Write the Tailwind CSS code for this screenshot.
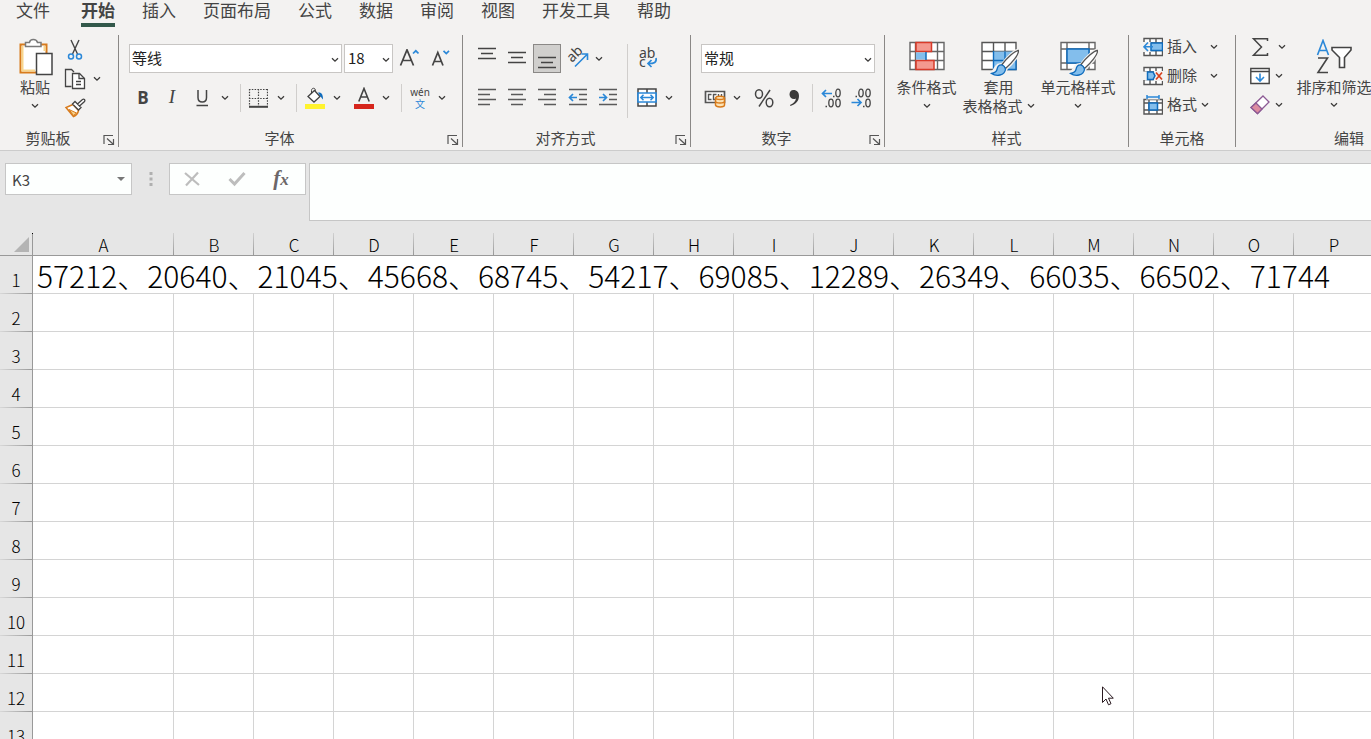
<!DOCTYPE html>
<html lang="zh-CN">
<head>
<meta charset="utf-8">
<meta name="viewport" content="width=device-width, initial-scale=1">
<title>工作表</title>
<script src="https://cdn.jsdelivr.net/npm/@tailwindcss/browser@4"></script>
</head>
<body class="relative flex h-screen flex-col overflow-hidden bg-[#e6e6e6] font-['Noto_Sans_CJK_SC',sans-serif] text-[15px] text-[#444444]">

<svg class="hidden" aria-hidden="true">
  <symbol id="chev" viewBox="0 0 8 6"><path d="M1 1.2 4 4.2 7 1.2" fill="none" stroke="#3b3a39" stroke-width="1.3"/></symbol>
  <symbol id="launch" viewBox="0 0 12 12"><path d="M1 10V1.500H10M4 4.500 10 10M10.500 5V10.500H5" fill="none" stroke="#555" stroke-width="1.200"/></symbol>
  <symbol id="brush" viewBox="0 0 30 28">
    <path d="M28.500 1.500C25 1.500 17 9 12.500 15.500L8 16.500C5 18 6 22 1 24.500 6 27 14 26.500 15.500 20.500L16.500 19C22 14 29 5.500 28.500 1.500Z" fill="#f3f2f1" stroke="#f3f2f1" stroke-width="3.500"/>
    <path d="M28.500 1.500C25 1.500 17 9 12 15.500L15.500 19.500C22 14 29 5.500 28.500 1.500Z" fill="#fff" stroke="#555" stroke-width="1.300"/>
    <path d="M12 16C8.500 15.500 7.500 18 7 20.500 6.500 23 4 24 1.500 24.500 6 27.500 15 27 15.500 20 15 18 13.500 16.500 12 16Z" fill="#83beec" stroke="#0f6cbd" stroke-width="1.300"/>
  </symbol>
</svg>

<header class="shrink-0 border-b border-[#cccccc] bg-[#f3f2f1]">
  <nav class="flex h-[27px] gap-[27px] pl-4 text-[17px] leading-5" aria-label="功能区">
    <a href="#" class="mr-1 shrink-0">文件</a>
    <a href="#" aria-current="page" class="h-[27px] shrink-0 border-b-4 border-[#32584a] font-bold">开始</a>
    <a href="#" class="shrink-0">插入</a>
    <a href="#" class="shrink-0">页面布局</a>
    <a href="#" class="shrink-0">公式</a>
    <a href="#" class="shrink-0">数据</a>
    <a href="#" class="shrink-0">审阅</a>
    <a href="#" class="shrink-0">视图</a>
    <a href="#" class="shrink-0">开发工具</a>
    <a href="#" class="shrink-0">帮助</a>
  </nav>

  <div class="flex overflow-hidden pt-2 pb-[3px]">

    <!-- 剪贴板 -->
    <section class="flex h-28 w-[119px] shrink-0 flex-col justify-between border-r border-[#8a8886]">
      <div class="flex pl-[14px]">
        <button class="flex w-[42px] flex-col items-center pt-[2px] leading-5">
          <svg class="h-10 w-[36px]" viewBox="0 0 36 40" fill="none">
            <path d="M3.500 7.500H29.500V35.500H3.500Z" fill="#fff" stroke="#d87b1c" stroke-width="2"/>
            <path d="M5.500 9V33.500H18M27.500 9V14" stroke="#f8d58c" stroke-width="2"/>
            <path d="M8.500 9.500V5.500H12.500C13 1.500 19.500 1.500 20.500 5.500H24V9.500Z" fill="#fff" stroke="#7a7a7a" stroke-width="1.500"/>
            <path d="M19.500 16.500H35V37.500H19.500Z" fill="#fff" stroke="#444" stroke-width="1.500"/>
          </svg>
          <span>粘贴</span>
          <svg class="mt-[6px] h-[6px] w-2"><use href="#chev"/></svg>
        </button>
        <div class="flex flex-col pl-2">
          <button class="flex h-[29px] w-[22px] items-center justify-center" aria-label="剪切">
            <svg class="h-[22px] w-4" viewBox="0 0 16 22" fill="none">
              <path d="M4 1 10.500 15M12 1 5.500 15" stroke="#444" stroke-width="1.400"/>
              <circle cx="4" cy="17.500" r="2.500" stroke="#2b88d8" stroke-width="1.500"/><circle cx="12" cy="17.500" r="2.500" stroke="#2b88d8" stroke-width="1.500"/>
            </svg>
          </button>
          <div class="flex">
            <button class="flex h-[29px] w-[22px] items-center justify-center" aria-label="复制">
              <svg class="h-[22px] w-[22px]" viewBox="0 0 22 22" fill="none" stroke="#444" stroke-width="1.300">
                <path d="M7.500 18.500H1.500V1.500H7.500L10 4"/><path d="M8.500 5.500H15.500L20.500 10.500V20.500H8.500Z" fill="#fff"/><path d="M15 5.500V10.500H20.500M12 13.500H17M12 16.500H17"/>
              </svg>
            </button>
            <button class="flex h-[29px] w-[22px] items-center justify-center" aria-label="复制选项"><svg class="h-[6px] w-2"><use href="#chev"/></svg></button>
          </div>
          <button class="flex h-[29px] w-[22px] items-center justify-center" aria-label="格式刷">
            <svg class="h-5 w-[22px]" viewBox="0 0 22 20" fill="none">
              <path d="M9 6.500 2 9.500 9.500 18.500C12 17.500 14 15 14.500 12.500Z" fill="#fff" stroke="#d87b1c" stroke-width="1.500"/>
              <path d="M5 11.500 12.500 15 9.500 17.500Z" fill="#f8d58c" stroke="#d87b1c"/>
              <path d="M8.500 6 11 3.500 17 9.500 14.500 12Z M13.500 6 18.500 1.500C20 .5 21.500 2 20.500 3.500L15.500 8" fill="#fff" stroke="#444" stroke-width="1.300"/>
            </svg>
          </button>
        </div>
      </div>
      <div class="flex h-[18px] items-center leading-[18px]"><h2 class="flex-1 text-center">剪贴板</h2><button class="w-[22px]" aria-label="剪贴板设置"><svg class="mt-1 ml-[7px] h-3 w-3"><use href="#launch"/></svg></button></div>
    </section>

    <!-- 字体 -->
    <section class="flex h-28 w-[344px] shrink-0 flex-col justify-between border-r border-[#8a8886]">
      <div class="flex flex-col gap-[10px] pt-[9px] pl-[10px]">
        <div class="flex h-[29px]">
          <div class="relative mr-[2px] w-[213px]"><select aria-label="字体" class="h-full w-full appearance-none border border-[#c8c6c4] bg-white pl-[2px] text-[#222]"><option>等线</option></select><svg class="pointer-events-none absolute top-[13px] right-[3px] h-[6px] w-2"><use href="#chev"/></svg></div>
          <div class="relative w-[49px]"><select aria-label="字号" class="h-full w-full appearance-none border border-[#c8c6c4] bg-white pl-[3px] text-[#222]"><option>18</option></select><svg class="pointer-events-none absolute top-[13px] right-[3px] h-[6px] w-2"><use href="#chev"/></svg></div>
          <button class="flex w-8 items-center justify-center" aria-label="增大字号">
            <svg class="h-5 w-5" viewBox="0 0 20 20" fill="none"><path d="M1.500 16.500 8 .8 14.500 16.500M4 11.500H12" stroke="#444" stroke-width="1.700"/><path d="M14 4.500 16.800 1.800 19.500 4.500" stroke="#2b88d8" stroke-width="1.700"/></svg>
          </button>
          <button class="flex w-8 items-center justify-center" aria-label="减小字号">
            <svg class="h-5 w-5" viewBox="0 0 20 20" fill="none"><path d="M1.500 16.500 6.800 3.500 12 16.500M3.500 12.500H10" stroke="#444" stroke-width="1.700"/><path d="M12.500 1.800 15.300 4.500 18 1.800" stroke="#2b88d8" stroke-width="1.700"/></svg>
          </button>
        </div>
        <div class="flex h-[29px] items-center">
          <button class="w-7 font-['Open_Sans',sans-serif] text-[17px] font-bold">B</button>
          <button class="w-[30px] font-['Liberation_Serif',serif] text-[19px] italic">I</button>
          <button class="flex w-[30px] justify-center" aria-label="下划线"><svg class="h-5 w-4" viewBox="0 0 16 20" fill="none" stroke="#444" stroke-width="1.500"><path d="M4 2V9.500C4 15.500 12.500 15.500 12.500 9.500V2M2.500 17.500H14"/></svg></button>
          <button class="flex w-4 justify-center" aria-label="下划线选项"><svg class="h-[6px] w-2"><use href="#chev"/></svg></button>
          <i class="mx-[7px] h-7 w-px bg-[#d0cecc]"></i>
          <button class="flex w-[22px]" aria-label="边框"><svg class="h-5 w-5" viewBox="0 0 20 20" fill="none" stroke="#444"><path d="M1 1.500H20M1.500 1V18M10.500 1V18M19.500 1V18M1 10.500H20" stroke-width="1.200" stroke-dasharray="1.500 1.300"/><path d="M1 18.800H20" stroke-width="2"/></svg></button>
          <button class="ml-[3px] flex w-4 justify-center" aria-label="边框选项"><svg class="h-[6px] w-2"><use href="#chev"/></svg></button>
          <i class="mx-[7px] h-7 w-px bg-[#d0cecc]"></i>
          <button class="flex w-[22px] justify-center" aria-label="填充颜色"><svg class="h-[22px] w-5" viewBox="0 0 20 22" fill="none"><path d="M3 9.500 9.500 3.500 15 9.500 9 15Z" fill="#fff" stroke="#444" stroke-width="1.300"/><path d="M6.500 7V3.500C6.500.5 10.500.5 10.500 3.500V5" stroke="#444"/><path d="M13 5.500C16.500 5 18 7 18 12.500L15.500 9.500Z" fill="#0f6cbd"/><path d="M0 17H20V22H0Z" fill="#fff32e"/></svg></button>
          <button class="ml-[3px] flex w-4 justify-center" aria-label="填充颜色选项"><svg class="h-[6px] w-2"><use href="#chev"/></svg></button>
          <button class="ml-2 flex w-[22px] justify-center" aria-label="字体颜色"><svg class="h-[22px] w-5" viewBox="0 0 20 22" fill="none"><path d="M4.800 14.500 10 1.500 15.200 14.500M6.500 10H13.500" stroke="#444" stroke-width="1.600"/><path d="M0 17H20V22H0Z" fill="#d6261c"/></svg></button>
          <button class="ml-[3px] flex w-4 justify-center" aria-label="字体颜色选项"><svg class="h-[6px] w-2"><use href="#chev"/></svg></button>
          <i class="mx-[7px] h-7 w-px bg-[#d0cecc]"></i>
          <button class="flex w-[22px] flex-col items-center font-['Noto_Sans','Noto_Sans_CJK_SC',sans-serif] text-[10px] leading-[13px]"><span>wén</span><span class="leading-[10px] text-[#2b88d8]">文</span></button>
          <button class="ml-[3px] flex w-4 justify-center" aria-label="拼音选项"><svg class="h-[6px] w-2"><use href="#chev"/></svg></button>
        </div>
      </div>
      <div class="flex h-[18px] items-center leading-[18px]"><h2 class="flex-1 text-center">字体</h2><button class="w-[22px]" aria-label="字体设置"><svg class="mt-1 ml-[7px] h-3 w-3"><use href="#launch"/></svg></button></div>
    </section>

    <!-- 对齐方式 -->
    <section class="flex h-28 w-[228px] shrink-0 flex-col justify-between border-r border-[#8a8886]">
      <div class="flex pt-[9px] pl-[10px]">
        <div class="flex w-[154px] flex-col gap-[10px]">
          <div class="flex h-[29px] gap-[2px]">
            <button class="w-7" aria-label="顶端对齐"><svg class="h-[29px] w-7" viewBox="0 0 28 29" stroke="#444" stroke-width="1.500"><path d="M5 4.500H23M8 9.500H20M5 14.500H23"/></svg></button>
            <button class="w-7" aria-label="垂直居中"><svg class="h-[29px] w-7" viewBox="0 0 28 29" stroke="#444" stroke-width="1.500"><path d="M5 8.500H23M8 13.500H20M5 18.500H23"/></svg></button>
            <button class="w-7 bg-[#d0cfcd] outline outline-1 -outline-offset-1 outline-[#8a8886]" aria-pressed="true" aria-label="底端对齐"><svg class="h-[29px] w-7" viewBox="0 0 28 29" stroke="#444" stroke-width="1.500"><path d="M5 13.500H23M8 18.500H20M5 23.500H23"/></svg></button>
            <button class="w-7" aria-label="方向"><svg class="h-[29px] w-7" viewBox="0 0 28 29" fill="none"><text transform="translate(9 19) rotate(-45)" font-size="14" font-family="Noto Sans, sans-serif" fill="#444">ab</text><path d="M12 22.500 24.500 10M18.500 10H24.500V16" stroke="#2b88d8" stroke-width="1.600"/></svg></button>
            <button class="flex w-3 items-center justify-center" aria-label="方向选项"><svg class="h-[6px] w-2"><use href="#chev"/></svg></button>
          </div>
          <div class="flex h-[29px] gap-[2px]">
            <button class="w-7" aria-label="左对齐"><svg class="h-[29px] w-7" viewBox="0 0 28 29" stroke="#5a5a5a" stroke-width="1.500"><path d="M5 6.500H23M5 11.500H17M5 16.500H23M5 21.500H17"/></svg></button>
            <button class="w-7" aria-label="居中"><svg class="h-[29px] w-7" viewBox="0 0 28 29" stroke="#5a5a5a" stroke-width="1.500"><path d="M5 6.500H23M8 11.500H20M5 16.500H23M8 21.500H20"/></svg></button>
            <button class="w-7" aria-label="右对齐"><svg class="h-[29px] w-7" viewBox="0 0 28 29" stroke="#5a5a5a" stroke-width="1.500"><path d="M5 6.500H23M11 11.500H23M5 16.500H23M11 21.500H23"/></svg></button>
            <button class="w-7" aria-label="减少缩进量"><svg class="h-[29px] w-7" viewBox="0 0 28 29" fill="none" stroke="#5a5a5a" stroke-width="1.500"><path d="M6 6.500H24M16 11.500H24M16 16.500H24M6 21.500H24"/><path d="M14 14.500H7M10 11 6.500 14.500 10 18" stroke="#2b88d8" stroke-width="1.700"/></svg></button>
            <button class="w-7" aria-label="增加缩进量"><svg class="h-[29px] w-7" viewBox="0 0 28 29" fill="none" stroke="#5a5a5a" stroke-width="1.500"><path d="M6 6.500H24M16 11.500H24M16 16.500H24M6 21.500H24"/><path d="M6 14.500H13M10 11 13.500 14.500 10 18" stroke="#2b88d8" stroke-width="1.700"/></svg></button>
          </div>
        </div>
        <i class="h-[74px] w-px self-start bg-[#d0cecc]"></i>
        <div class="flex flex-col gap-[10px] pl-[5px]">
          <button class="h-[29px] w-7" aria-label="自动换行"><svg class="h-[29px] w-7" viewBox="0 0 28 29" fill="none"><g font-size="14" font-family="Noto Sans, sans-serif" fill="#444"><text x="6" y="14">ab</text><text x="6" y="23">c</text></g><path d="M23 14C24 18.500 21 19.500 15.500 19.500M18.500 16 15 19.500 18.500 23" stroke="#2b88d8" stroke-width="1.700"/></svg></button>
          <div class="flex gap-[2px]">
            <button class="h-[29px] w-7" aria-label="合并后居中"><svg class="h-[29px] w-7" viewBox="0 0 28 29" fill="none"><path d="M5 6H23V23H5ZM14 6V23" fill="#fff" stroke="#444" stroke-width="1.500"/><path d="M5 10H23V19H5Z" fill="#fff" stroke="#2b88d8" stroke-width="1.700"/><path d="M7.500 14.500H20.500M10.500 11.800 7.800 14.500 10.500 17.200M17.500 11.800 20.200 14.500 17.500 17.200" stroke="#2b88d8" stroke-width="1.500"/></svg></button>
            <button class="flex w-3 items-center justify-center" aria-label="合并选项"><svg class="h-[6px] w-2"><use href="#chev"/></svg></button>
          </div>
        </div>
      </div>
      <div class="flex h-[18px] items-center leading-[18px]"><h2 class="flex-1 text-center">对齐方式</h2><button class="w-[22px]" aria-label="对齐设置"><svg class="mt-1 ml-[7px] h-3 w-3"><use href="#launch"/></svg></button></div>
    </section>

    <!-- 数字 -->
    <section class="flex h-28 w-[194px] shrink-0 flex-col justify-between border-r border-[#8a8886]">
      <div class="flex flex-col gap-[10px] pt-[9px] pl-[10px]">
        <div class="relative h-[29px] w-[174px]"><select aria-label="数字格式" class="h-full w-full appearance-none border border-[#c8c6c4] bg-white pl-[2px] text-[#222]"><option>常规</option></select><svg class="pointer-events-none absolute top-[13px] right-[3px] h-[6px] w-2"><use href="#chev"/></svg></div>
        <div class="flex h-[29px] items-center">
          <button class="flex w-7 justify-center" aria-label="会计数字格式"><svg class="h-5 w-[22px]" viewBox="0 0 22 20" fill="none"><path d="M1.500 3.500H20.500V14.500H1.500Z" fill="#fff" stroke="#555" stroke-width="1.700"/><path d="M7.500 6.500H4.500V11.500H7.500M12.500 6.500H9.500V11.500H12.500M14.500 6V8.500M17.500 6V8.500" stroke="#555" stroke-width="1.400"/><path d="M11.500 10V17C12 19.500 20.500 19.500 20.500 17V10C20 7.500 12 7.500 11.500 10Z" fill="#fce3b6" stroke="#d87b1c" stroke-width="1.500"/><path d="M11.500 10C12 12 20 12 20.500 10M11.500 13.500C12 15.500 20 15.500 20.500 13.500" stroke="#d87b1c" stroke-width="1.300"/></svg></button>
          <button class="flex w-4 justify-center" aria-label="会计格式选项"><svg class="h-[6px] w-2"><use href="#chev"/></svg></button>
          <button class="ml-1 flex w-[30px] justify-center" aria-label="百分比样式"><svg class="h-5 w-5" viewBox="0 0 20 20" fill="none" stroke="#444" stroke-width="1.500"><ellipse cx="5" cy="6" rx="3.500" ry="4.200"/><ellipse cx="15.500" cy="14.500" rx="3.300" ry="4.200"/><path d="M16 2 5 18.500"/></svg></button>
          <button class="flex w-[30px] justify-center" aria-label="千位分隔样式"><svg class="h-5 w-3" viewBox="0 0 12 20" fill="#3b3a39"><path d="M5.500 2C9 2 11 4.500 11 8 11 13 7.500 16.500 2.500 18L2 17C5.500 15.500 7.500 13.500 8 10.500 5 12 1.500 10 1.500 6.500 1.500 4 3 2 5.500 2Z"/></svg></button>
          <i class="mx-[3px] h-7 w-px bg-[#d0cecc]"></i>
          <button class="flex w-[30px] justify-center" aria-label="增加小数位数"><svg class="h-[22px] w-5" viewBox="0 0 20 22" fill="none" stroke="#444" stroke-width="1.300"><ellipse cx="17" cy="6" rx="2.200" ry="3.800"/><ellipse cx="10" cy="16" rx="2.200" ry="3.800"/><ellipse cx="17" cy="16" rx="2.200" ry="3.800"/><path d="M4.500 19.500H6M12 9.500H13.500" stroke-width="1.500"/><path d="M11 6.500H1.500M5 3 1.500 6.500 5 10" stroke="#2b88d8" stroke-width="1.700"/></svg></button>
          <button class="flex w-[30px] justify-center" aria-label="减少小数位数"><svg class="h-[22px] w-5" viewBox="0 0 20 22" fill="none" stroke="#444" stroke-width="1.300"><ellipse cx="10" cy="6" rx="2.200" ry="3.800"/><ellipse cx="17" cy="6" rx="2.200" ry="3.800"/><ellipse cx="17" cy="16" rx="2.200" ry="3.800"/><path d="M4.500 9.500H6M12 19.500H13.500" stroke-width="1.500"/><path d="M.5 15.500H10M6.500 12 10 15.500 6.500 19" stroke="#2b88d8" stroke-width="1.700"/></svg></button>
        </div>
      </div>
      <div class="flex h-[18px] items-center leading-[18px]"><h2 class="flex-1 text-center">数字</h2><button class="w-[22px]" aria-label="数字设置"><svg class="mt-1 ml-[7px] h-3 w-3"><use href="#launch"/></svg></button></div>
    </section>

    <!-- 样式 -->
    <section class="flex h-28 w-[244px] shrink-0 flex-col justify-between border-r border-[#8a8886]">
      <div class="flex items-start pt-[6px] pl-[6px] leading-[19px]">
        <button class="flex w-[71px] flex-col items-center">
          <svg class="h-9 w-9" viewBox="0 0 36 36" fill="none"><path d="M1 1.500H35V28.500H1ZM1 10.500H35M1 19.500H35M6.500 1V28M28.500 1V28" fill="#fff" stroke="#666" stroke-width="1.400"/><path d="M7 1.500H22.500V10.500H7ZM7 19.500H25V28.500H7Z" fill="#f4998f" stroke="#d83b2a" stroke-width="1.500"/><path d="M7 11.500H17V18.500H7Z" fill="#83beec"/><path d="M17 11V19" stroke="#0f6cbd" stroke-width="1.500"/></svg>
          <span>条件格式</span>
          <svg class="mt-[7px] h-[6px] w-2"><use href="#chev"/></svg>
        </button>
        <button class="flex w-[73px] flex-col items-center">
          <svg class="h-9 w-[40px]" viewBox="0 0 40 36" fill="none"><path d="M3 1.500H37V28.500H3ZM3 10.500H37" fill="#fff" stroke="#555" stroke-width="1.400"/><path d="M14.500 10.500H37V28.500H14.500Z" fill="#83beec"/><path d="M3 19.500H14M14.500 1V10M26 1V10" stroke="#555" stroke-width="1.400"/><path d="M14.500 10V28.500H37V10M14.500 19.500H37M26 10.500V28.500" stroke="#0f6cbd" stroke-width="1.400"/><use href="#brush" x="11" y="8" width="30" height="28"/></svg>
          <span>套用</span>
          <span class="flex items-center gap-1 whitespace-nowrap">表格格式<svg class="h-[6px] w-2"><use href="#chev"/></svg></span>
        </button>
        <button class="flex w-[86px] flex-col items-center">
          <svg class="h-9 w-[40px]" viewBox="0 0 40 36" fill="none"><path d="M3 1.500H37V28.500H3ZM9 1V28M31 1V28M3 8H37M3 22H37" fill="#fff" stroke="#666" stroke-width="1.400"/><path d="M9 8H31V22H9Z" fill="#83beec" stroke="#0f6cbd" stroke-width="1.500"/><use href="#brush" x="11" y="8" width="30" height="28"/></svg>
          <span>单元格样式</span>
          <svg class="mt-[7px] h-[6px] w-2"><use href="#chev"/></svg>
        </button>
      </div>
      <h2 class="h-[18px] text-center leading-[18px]">样式</h2>
    </section>

    <!-- 单元格 -->
    <section class="flex h-28 w-[107px] shrink-0 flex-col justify-between border-r border-[#8a8886]">
      <div class="flex flex-col gap-[6px] pl-[14px]">
        <button class="flex h-[23px] items-center gap-1">
          <svg class="h-5 w-5" viewBox="0 0 20 20" fill="none"><path d="M1 1.500H19.500V18.500H1ZM7 1V18M13 1V18M1 6H19M1 13.500H19" fill="#fff" stroke="#555" stroke-width="1.400"/><path d="M0 5H8V15H0Z" fill="#f3f2f1"/><path d="M8 6H19.500V13.500H8Z" fill="#83beec" stroke="#0f6cbd" stroke-width="1.500"/><path d="M10 9.800H1M5 5.500 1 9.800 5 14" stroke="#2b88d8" stroke-width="1.600"/></svg>
          插入<svg class="ml-[9px] h-[6px] w-2"><use href="#chev"/></svg></button>
        <button class="flex h-[23px] items-center gap-1">
          <svg class="h-5 w-5" viewBox="0 0 20 20" fill="none"><path d="M1 1.500H19.500V18.500H1ZM7 1V18M13 1V18M1 6H19M1 13.500H19" fill="#fff" stroke="#555" stroke-width="1.400"/><path d="M0 5.500H4V14H0ZM11 5H20V15H11Z" fill="#f3f2f1"/><path d="M4.500 6H10L12 9.800 10 13.500H4.500Z" fill="#83beec" stroke="#0f6cbd" stroke-width="1.500"/><path d="M13 6.500 19 13.500M19 6.500 13 13.500" stroke="#d8431f" stroke-width="1.700"/></svg>
          删除<svg class="ml-[9px] h-[6px] w-2"><use href="#chev"/></svg></button>
        <button class="flex h-[23px] items-center gap-1">
          <svg class="h-5 w-5" viewBox="0 0 20 20" fill="none"><path d="M1 4.500H19.500V19H1ZM6 4V19M14 4V19M1 8H19M1 15H19" fill="#fff" stroke="#555" stroke-width="1.400"/><path d="M3 0H17V4.500H3Z" fill="#f3f2f1"/><path d="M6 8H14.500V15H6Z" fill="#83beec" stroke="#0f6cbd" stroke-width="1.500"/><path d="M4 2H16M4 0V4M16 0V4" stroke="#2b88d8" stroke-width="1.500"/></svg>
          格式<svg class="h-[6px] w-2"><use href="#chev"/></svg></button>
      </div>
      <h2 class="h-[18px] text-center leading-[18px]">单元格</h2>
    </section>

    <!-- 编辑 -->
    <section class="flex h-28 w-[226px] shrink-0 flex-col justify-between">
      <div class="flex pl-[14px]">
        <div class="flex w-[45px] flex-col gap-[6px]">
          <button class="flex h-[23px] items-center gap-[8px]" aria-label="自动求和"><svg class="h-5 w-5" viewBox="0 0 20 20" fill="none" stroke="#444" stroke-width="1.500"><path d="M17.500 4V1.800H3.500L11.500 10 3.500 18.200H17.500V16"/></svg><svg class="h-[6px] w-2"><use href="#chev"/></svg></button>
          <button class="flex h-[23px] items-center gap-[5px]" aria-label="填充"><svg class="h-5 w-5" viewBox="0 0 20 20" fill="none"><path d="M.8 2.500H19.200V17.500H.8ZM.8 5.500H19.200" fill="#fff" stroke="#444" stroke-width="1.400"/><path d="M10 7.500V15M6 11 10 15 14 11" stroke="#2b88d8" stroke-width="1.600"/></svg><svg class="h-[6px] w-2"><use href="#chev"/></svg></button>
          <button class="flex h-[23px] items-center gap-[5px]" aria-label="清除"><svg class="h-5 w-5" viewBox="0 0 20 20" fill="none" stroke="#8c5a94" stroke-width="1.300"><path d="M13 1 19 7 7.500 18.500 1 12.500Z" fill="#fff"/><path d="M6 8 12 14 7.500 18.500 1 12.500Z" fill="#dd8ba0"/></svg><svg class="h-[6px] w-2"><use href="#chev"/></svg></button>
        </div>
        <button class="flex w-[78px] flex-col items-center pt-[4px] leading-[19px]">
          <svg class="h-[38px] w-[36px]" viewBox="0 0 36 38" fill="none" stroke-width="1.600"><path d="M1.500 16 7 1.500 12.500 16M3.500 11.500H10.500" stroke="#2b88d8"/><path d="M2 19H11.500L2 33.500H12" stroke="#444"/><path d="M16 8.500H35V11L28.500 18.500V28.500H23.500V18.500L16 11Z" fill="#fff" stroke="#444"/></svg>
          <span class="whitespace-nowrap">排序和筛选</span>
          <svg class="mt-[6px] h-[6px] w-2"><use href="#chev"/></svg>
        </button>
      </div>
      <h2 class="h-[18px] text-center leading-[18px]">编辑</h2>
    </section>
  </div>
</header>

<!-- 名称框与编辑栏 -->
<div class="flex shrink-0 items-start pt-3 pl-[5px]">
  <div class="relative w-[127px]"><input aria-label="名称框" value="K3" class="h-8 w-full border border-[#c6c6c6] bg-[#fdfffe] pl-[6px] text-[15px]"><svg class="absolute top-[14px] right-[7px] h-1 w-2" viewBox="0 0 8 4"><path d="M0 0H8L4 4Z" fill="#777"/></svg></div>
  <svg class="mt-[9px] ml-[17px] h-[14px] w-1" viewBox="0 0 4 14" fill="#b0b0b0"><path d="M.5 0H3.500V3H.5ZM.5 5.500H3.500V8.500H.5ZM.5 11H3.500V14H.5Z"/></svg>
  <div class="mr-[3px] ml-4 flex h-8 w-[137px] items-center border border-[#c6c6c6] bg-[#fdfffe]">
    <button class="flex w-[44px] justify-center" aria-label="取消"><svg class="h-4 w-4" viewBox="0 0 16 16" stroke="#bdbdbd" stroke-width="2.200"><path d="M1 2 15 14M14 1.500 2 14.500"/></svg></button>
    <button class="flex w-[46px] justify-center" aria-label="输入"><svg class="h-4 w-[18px]" viewBox="0 0 18 16" fill="none" stroke="#bdbdbd" stroke-width="3"><path d="M1.500 8 6.500 13 16.500 2"/></svg></button>
    <button class="w-[42px] font-['Liberation_Serif',serif] text-[21px] leading-6 font-bold italic text-[#6b6668]" aria-label="插入函数">f<span class="text-[17px]">x</span></button>
  </div>
  <textarea aria-label="编辑栏" class="block h-[58px] min-w-0 flex-1 resize-none border border-r-0 border-[#c6c6c6] bg-[#fdfffe]"></textarea>
</div>

<!-- 工作表 -->
<main class="mt-3 min-h-0 flex-1 overflow-hidden bg-white">
  <table class="w-[1374px] table-fixed border-separate border-spacing-0 text-black">
    <colgroup id="cols"></colgroup>
    <thead><tr id="heads" class="h-[23px] bg-[#e6e6e6]"></tr></thead>
    <tbody id="rows"></tbody>
  </table>
</main>

<svg class="pointer-events-none absolute top-[686px] left-[1102px] h-5 w-3" viewBox="0 0 12 20"><path d="M.5 .8V16.500L4 13 6.500 18.800 9 17.700 6.500 12.200H11.300Z" fill="#fff" stroke="#2a1a20"/></svg>

<script>
const letters = 'ABCDEFGHIJKLMNOP'.split('');
const numbers = [57212, 20640, 21045, 45668, 68745, 54217, 69085, 12289, 26349, 66035, 66502, 71744];
document.getElementById('cols').innerHTML =
  '<col class="w-[33px]"><col class="w-[141px]">' + '<col class="w-[80px]">'.repeat(15);
document.getElementById('heads').innerHTML =
  '<th class="border-b border-[#999999] bg-[linear-gradient(#000000_1px,#999999_1px)] bg-[length:1px_100%] bg-right bg-no-repeat p-0"><svg class="ml-[14px] h-[15px] w-[15px]" viewBox="0 0 15 15"><path d="M15 0V15H0Z" fill="#b4b4b4"/></svg></th>' +
  letters.map(l => `<th scope="col" class="border-b border-[#999999] bg-[linear-gradient(#d0d0d0,#999999)] bg-[length:1px_100%] bg-right bg-no-repeat p-0 pt-[2px] text-[17px] leading-5 font-light">${l}</th>`).join('');
let html = '';
for (let r = 1; r <= 13; r++) {
  html += `<tr class="h-[38px]"><th scope="row" class="border-r border-[#999999] bg-[#e6e6e6] bg-[linear-gradient(to_right,#d8d8d8,#999999)] bg-[length:100%_1px] bg-bottom bg-no-repeat p-0 pt-[10px] text-[17px] leading-6 font-light">${r}</th>`;
  html += r === 1
    ? `<td colspan="16" class="border-b border-[#d4d4d4] p-0 pl-1 text-[30px] leading-8 font-light whitespace-nowrap">${numbers.join('、')}</td>`
    : '<td class="border-r border-b border-[#d4d4d4]"></td>'.repeat(16);
  html += '</tr>';
}
document.getElementById('rows').innerHTML = html;
</script>
</body>
</html>
